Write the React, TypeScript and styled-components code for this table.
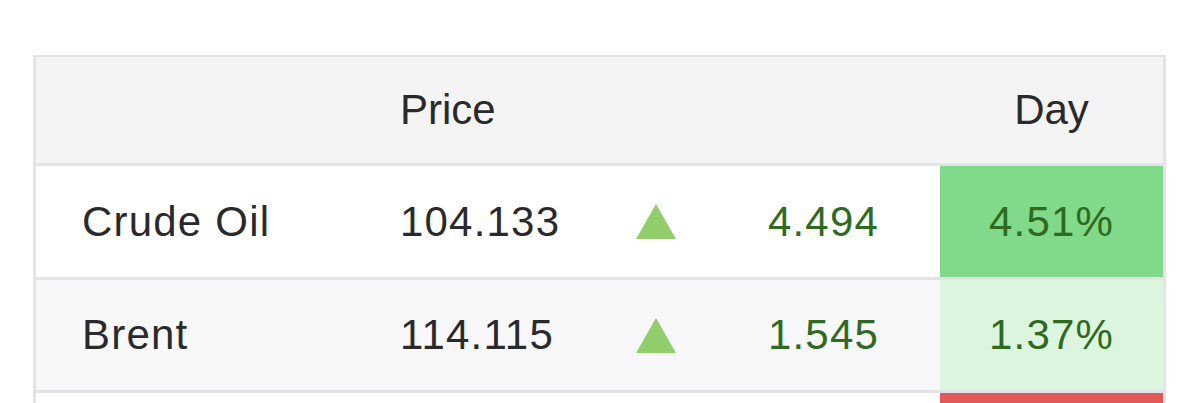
import React from "react";
import styled, { createGlobalStyle } from "styled-components";

const Global = createGlobalStyle`
  html, body { margin: 0; padding: 0; background: #ffffff; overflow: hidden; }
  body { font-family: "Liberation Sans", Arial, Helvetica, sans-serif; }
`;

const Page = styled.div`
  width: 1200px;
  height: 403px;
  padding: 55px 0 0 33px;
  box-sizing: border-box;
  overflow: hidden;
`;

const Table = styled.div`
  width: 1133px;
  border-top: 2px solid #e3e3e8;
  border-left: 3px solid #e3e3e8;
  border-right: 3px solid #e3e3e8;
  box-sizing: border-box;
`;

const Row = styled.div<{ $h: number; $bg: string; $ls?: number }>`
  display: grid;
  grid-template-columns: 364px 220px 72px 248px 223px;
  height: ${(p) => p.$h}px;
  background: ${(p) => p.$bg};
  border-bottom: 3px solid #e3e3e8;
  font-size: 42px;
  letter-spacing: ${(p) => p.$ls || 0}px;
  color: #2a2a2c;
`;

const Cell = styled.div<{ $align?: string; $pl?: number; $pr?: number }>`
  display: flex;
  align-items: center;
  justify-content: ${(p) => p.$align || "flex-start"};
  padding-left: ${(p) => p.$pl || 0}px;
  padding-right: ${(p) => p.$pr || 0}px;
  white-space: nowrap;
`;

const Change = styled(Cell)`
  color: #2e6b1f;
`;

const DayCell = styled(Cell)<{ $bg: string }>`
  background: ${(p) => p.$bg};
  color: #2e6b1f;
`;

const Up = () => (
  <svg width="40" height="35" viewBox="0 0 40 35">
    <polygon points="20,0 40,35 0,35" fill="#92cd6c" />
  </svg>
);

const rows = [
  { name: "Crude Oil", price: "104.133", change: "4.494", pct: "4.51%", bg: "#ffffff", pbg: "#81d98a", h: 111 },
  { name: "Brent", price: "114.115", change: "1.545", pct: "1.37%", bg: "#f8f8fa", pbg: "#dcf5df", h: 110 },
];

export default function App() {
  return (
    <Page>
      <Global />
      <Table>
        <Row $h={106} $bg="#f4f4f5">
          <Cell />
          <Cell>Price</Cell>
          <Cell />
          <Cell />
          <Cell $align="center">Day</Cell>
        </Row>
        {rows.map((r) => (
          <Row key={r.name} $h={r.h} $bg={r.bg} $ls={1.2}>
            <Cell $pl={46}>{r.name}</Cell>
            <Cell>{r.price}</Cell>
            <Cell $align="center"><Up /></Cell>
            <Change $align="flex-end" $pr={61}>{r.change}</Change>
            <DayCell $align="center" $bg={r.pbg}>{r.pct}</DayCell>
          </Row>
        ))}
        <Row $h={110} $bg="#ffffff">
          <Cell />
          <Cell />
          <Cell />
          <Cell />
          <DayCell $bg="#e25757" />
        </Row>
      </Table>
    </Page>
  );
}
